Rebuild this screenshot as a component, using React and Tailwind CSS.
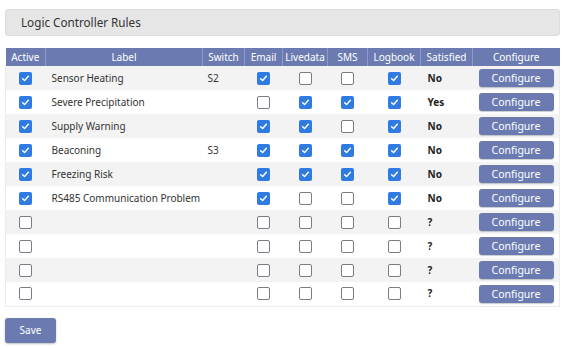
import React from 'react';

const rows = [
  { active: true, label: 'Sensor Heating', sw: 'S2', email: true, live: false, sms: false, log: true, sat: 'No' },
  { active: true, label: 'Severe Precipitation', sw: '', email: false, live: true, sms: true, log: true, sat: 'Yes' },
  { active: true, label: 'Supply Warning', sw: '', email: true, live: true, sms: false, log: true, sat: 'No' },
  { active: true, label: 'Beaconing', sw: 'S3', email: true, live: true, sms: true, log: true, sat: 'No' },
  { active: true, label: 'Freezing Risk', sw: '', email: true, live: true, sms: true, log: true, sat: 'No' },
  { active: true, label: 'RS485 Communication Problem', sw: '', email: true, live: false, sms: false, log: true, sat: 'No' },
  { active: false, label: '', sw: '', email: false, live: false, sms: false, log: false, sat: '?' },
  { active: false, label: '', sw: '', email: false, live: false, sms: false, log: false, sat: '?' },
  { active: false, label: '', sw: '', email: false, live: false, sms: false, log: false, sat: '?' },
  { active: false, label: '', sw: '', email: false, live: false, sms: false, log: false, sat: '?' },
];

const Check = ({ on }) =>
  on ? (
    <span className="inline-flex h-[13px] w-[13px] items-center justify-center rounded-[2px] bg-[#2f7be3] align-middle">
      <svg width="9" height="9" viewBox="0 0 10 10">
        <path d="M1.8 5.2 L4 7.3 L8.2 2.6" fill="none" stroke="white" strokeWidth="1.6" strokeLinecap="round" strokeLinejoin="round" />
      </svg>
    </span>
  ) : (
    <span className="inline-block h-[13px] w-[13px] rounded-[2px] border-[1.5px] border-[#7c7c86] bg-white align-middle" />
  );

const headers = ['Active', 'Label', 'Switch', 'Email', 'Livedata', 'SMS', 'Logbook', 'Satisfied', 'Configure'];
const widths = ['w-[40px]', 'w-[157px]', 'w-[42px]', 'w-[38px]', 'w-[45px]', 'w-[40px]', 'w-[53px]', 'w-[52px]', 'w-[87px]'];

const App = () => {
  return (
    <div className="min-h-screen bg-white px-[5px] pt-[9px] font-['Noto_Sans',sans-serif] text-[10px] text-[#333]">
      <div className="flex h-[27px] w-[555px] items-center rounded-[3px] border border-[#dcdcdc] bg-[#e6e6e6] pl-[15px] text-[11.7px] text-[#333]">
        Logic Controller Rules
      </div>

      <table className="mt-[12px] w-[554px] table-fixed border-collapse">
        <thead>
          <tr className="h-[18px] bg-[#6b7bb1] text-white">
            {headers.map((h, i) => (
              <th
                key={h}
                className={`${widths[i]} border-l border-[#8d9acb] p-0 text-center font-normal leading-[18px] first:border-l-0`}
              >
                {h}
              </th>
            ))}
          </tr>
        </thead>
        <tbody className="border-b border-x border-[#ececec]">
          {rows.map((r, i) => (
            <tr key={i} className={`h-[24px] ${i % 2 === 0 ? 'bg-[#f3f3f3]' : 'bg-white'}`}>
              <td className="p-0 text-center align-middle leading-none"><Check on={r.active} /></td>
              <td className="whitespace-nowrap px-[6px] align-middle">{r.label}</td>
              <td className="px-[5px] align-middle">{r.sw}</td>
              <td className="p-0 text-center align-middle leading-none"><Check on={r.email} /></td>
              <td className="p-0 text-center align-middle leading-none"><Check on={r.live} /></td>
              <td className="p-0 text-center align-middle leading-none"><Check on={r.sms} /></td>
              <td className="p-0 text-center align-middle leading-none"><Check on={r.log} /></td>
              <td className="px-[7px] align-middle font-bold text-[#222]">{r.sat}</td>
              <td className="px-[6px] align-middle leading-none">
                <button className="h-[18px] w-[75px] rounded-[3px] bg-[#6b7bb1] align-middle text-[10.5px] leading-[18px] text-white shadow-[0_1px_1px_rgba(0,0,0,0.2)]">
                  Configure
                </button>
              </td>
            </tr>
          ))}
        </tbody>
      </table>

      <button className="mt-[11px] h-[25px] w-[51px] rounded-[3px] bg-[#6b7bb1] text-[10px] text-white shadow-[0_1px_2px_rgba(0,0,0,0.25)]">
        Save
      </button>
    </div>
  );
};

export default App;
